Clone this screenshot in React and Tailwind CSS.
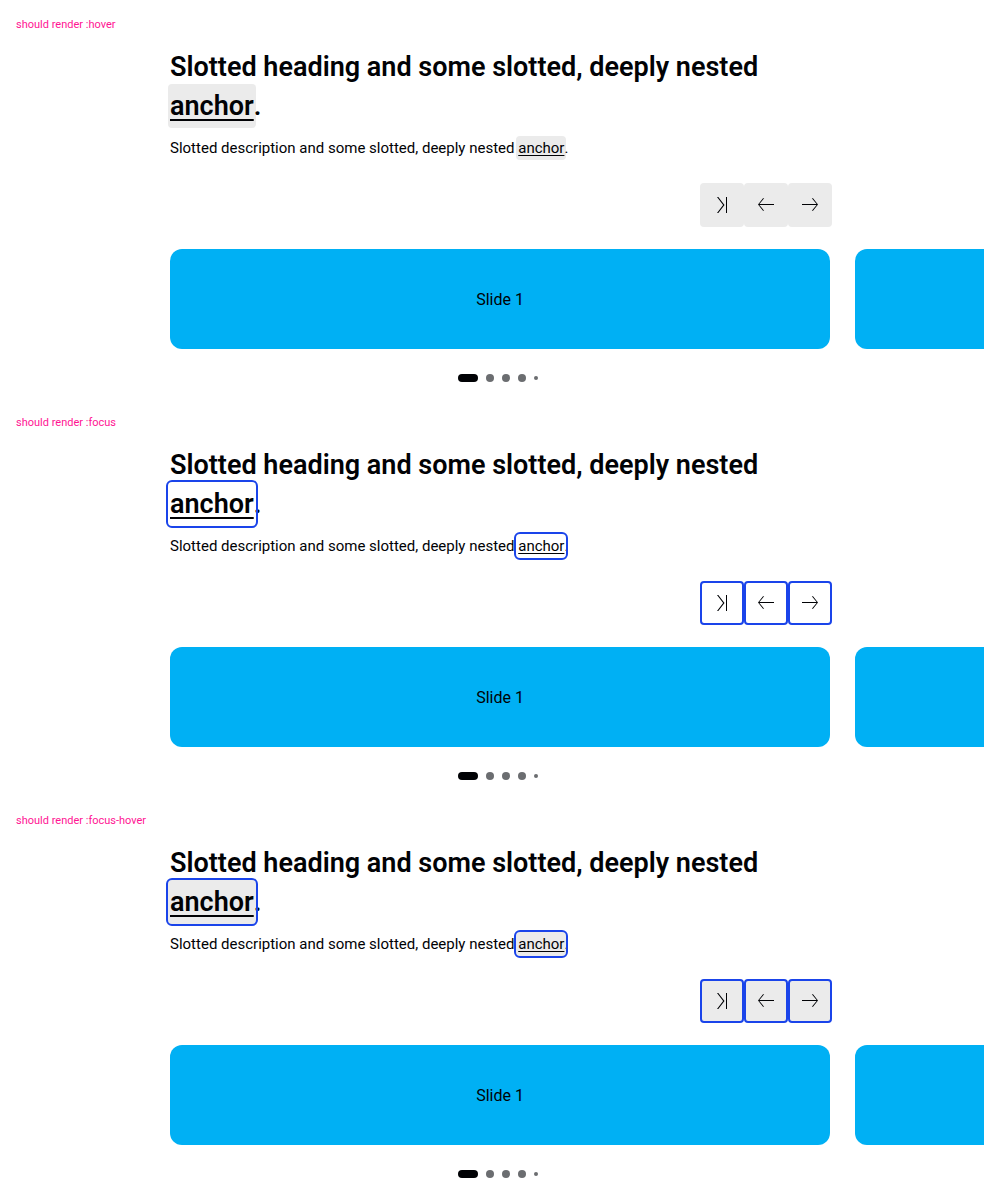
const states = [
  {
    name: 'hover',
    link: 'bg-[#ebebeb]',
    button: 'bg-[#ebebeb]',
  },
  {
    name: 'focus',
    link: 'outline-2 outline-[#1a44ea]',
    button: 'border-2 border-[#1a44ea]',
  },
  {
    name: 'focus-hover',
    link: 'bg-[#ebebeb] outline-2 outline-[#1a44ea]',
    button: 'border-2 border-[#1a44ea] bg-[#ebebeb]',
  },
];

const controls = [
  { label: 'Skip carousel', path: 'M7 4 H8.3 L14.5 12 L8.3 20 H7 L13.1 12 Z M16 4 H17 V20 H16 Z' },
  { label: 'Previous slide', path: 'M20 11 V12 H5.4 L10.2 17.8 H9 L4 11.5 L9 5.2 H10.2 L5.4 11 Z' },
  { label: 'Next slide', path: 'M4 11 V12 H18.6 L13.8 17.8 H15 L20 11.5 L15 5.2 H13.8 L18.6 11 Z' },
];

function Controls({ look }) {
  return (
    <div className="-mr-[2px] flex justify-end">
      {controls.map((c) => (
        <button
          key={c.label}
          type="button"
          aria-label={c.label}
          className={`flex size-11 items-center justify-center rounded-sm ${look}`}
        >
          <svg viewBox="0 0 24 24" className="size-6 shrink-0" fill="#010205">
            <path d={c.path} />
          </svg>
        </button>
      ))}
    </div>
  );
}

function Carousel({ state }) {
  return (
    <section className="px-4 pt-[17px] pb-4">
      <p className="text-[11px] leading-4 text-[#ff1493]">should render :{state.name}</p>
      <div className="mt-[15px] px-[calc(17vw-16px)]">
        <h2 className="text-[27px] leading-[39px] font-semibold">
          Slotted heading and some slotted, deeply nested{' '}
          <a
            href="#heading"
            className={`-mx-[2px] rounded-sm px-[2px] py-[6px] underline decoration-2 underline-offset-4 ${state.link}`}
          >
            anchor
          </a>
          .
        </h2>
        <p className="mt-[10px] mb-[23px] text-[15px] leading-6">
          Slotted description and some slotted, deeply nested{' '}
          <a
            href="#description"
            className={`-mx-[2px] rounded-sm px-[2px] py-[3px] underline underline-offset-2 ${state.link}`}
          >
            anchor
          </a>
          .
        </p>
        <Controls look={state.button} />
      </div>
      <div className="mt-[22px] flex gap-[25px] overflow-hidden pl-[calc(17vw-16px)]">
        <div className="flex h-[100px] w-[66vw] shrink-0 items-center justify-center rounded-xl bg-[#00b0f4] pt-[2px] text-base">
          Slide 1
        </div>
        <div aria-label="Slide 2" className="h-[100px] w-[66vw] shrink-0 rounded-xl bg-[#00b0f4]" />
      </div>
      <div className="mt-[25px] flex h-2 items-center justify-center gap-2 pr-1">
        <span className="h-2 w-5 rounded-full bg-[#010205]" />
        <span className="size-2 rounded-full bg-[#6b6d70]" />
        <span className="size-2 rounded-full bg-[#6b6d70]" />
        <span className="size-2 rounded-full bg-[#6b6d70]" />
        <span className="size-1 rounded-full bg-[#6b6d70]" />
      </div>
    </section>
  );
}

export default function App() {
  return (
    <main className="overflow-hidden bg-white font-[Roboto,sans-serif] text-[#010205]">
      {states.map((s) => (
        <Carousel key={s.name} state={s} />
      ))}
    </main>
  );
}
